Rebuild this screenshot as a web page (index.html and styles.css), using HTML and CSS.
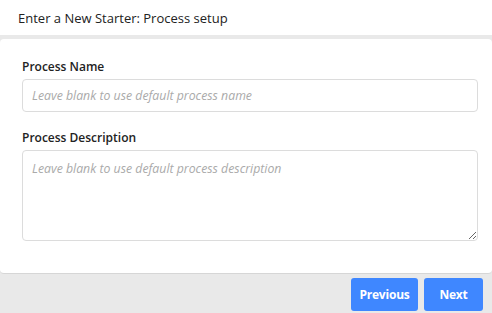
FILE: index.html
```html
<!DOCTYPE html>
<html>
<head>
<meta charset="utf-8">
<link rel="stylesheet" href="styles.css">
</head>
<body>
<div class="header">Enter a New Starter: Process setup</div>
<div class="card">
  <div class="field">
    <label class="label">Process Name</label>
    <input class="input" type="text" placeholder="Leave blank to use default process name">
  </div>
  <div class="field">
    <label class="label">Process Description</label>
    <textarea class="textarea" placeholder="Leave blank to use default process description"></textarea>
  </div>
</div>
<div class="footer">
  <button class="btn btn-prev">Previous</button>
  <button class="btn btn-next">Next</button>
</div>
</body>
</html>
```
FILE: styles.css
```css
* { box-sizing: border-box; }
html, body { margin: 0; padding: 0; }
body {
  width: 492px;
  height: 313px;
  overflow: hidden;
  background: #e9e9e9;
  font-family: "Open Sans", sans-serif;
  color: #222;
}
.header {
  height: 35px;
  background: #fff;
  padding-left: 18px;
  display: flex;
  align-items: center;
  font-size: 13px;
}
.card {
  margin-top: 4px;
  background: #fff;
  border-radius: 4px;
  height: 235px;
  padding: 20px 14px 0 22px;
  border-bottom: 1px solid #d6d6d6;
}
.field { display: flex; flex-direction: column; }
.field + .field { margin-top: 18px; }
.label {
  font-size: 12px;
  font-weight: 600;
  line-height: 16px;
  margin-bottom: 4px;
}
.input, .textarea {
  width: 456px;
  border: 1px solid #dcdcdc;
  border-radius: 4px;
  font-family: "Open Sans", sans-serif;
  font-size: 12.3px;
  padding: 0 9px;
  color: #222;
  outline: none;
}
.input { height: 33px; }
.textarea { height: 91px; padding-top: 9px; resize: vertical; }
.input::placeholder, .textarea::placeholder { color: #aaa; font-style: italic; }
.footer {
  display: flex;
  justify-content: flex-end;
  gap: 6px;
  padding: 4px 9px 0 0;
}
.btn {
  height: 33px;
  border: none;
  border-radius: 3px;
  background: #3f87ff;
  color: #fff;
  font-family: "Open Sans", sans-serif;
  font-weight: 700;
  font-size: 12px;
  letter-spacing: -0.2px;
  padding: 0;
}
.btn-prev { width: 67px; }
.btn-next { width: 59px; }
```
